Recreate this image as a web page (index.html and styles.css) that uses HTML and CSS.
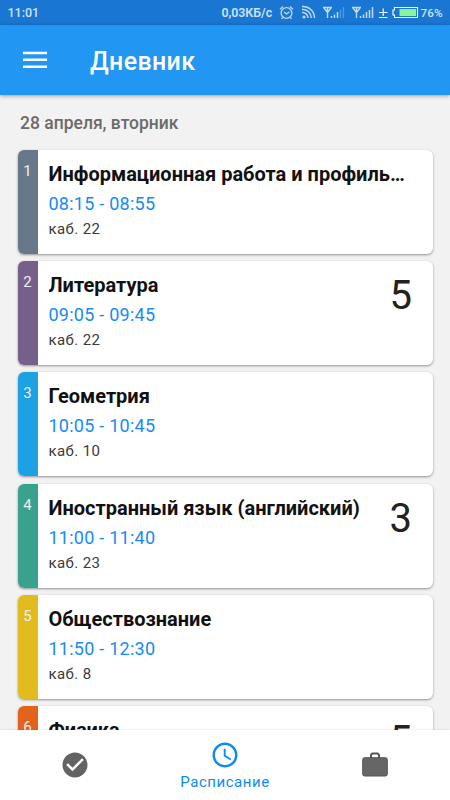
FILE: index.html
```html
<!DOCTYPE html>
<html lang="ru">
<head>
<meta charset="utf-8">
<title>Дневник</title>
<link rel="stylesheet" href="styles.css">
</head>
<body>
<div class="screen">
  <div class="status">
    <span class="clock">11:01</span>
    <span class="speed">0,03КБ/с</span>
    <svg class="status-icons" width="140" height="25" viewBox="0 0 140 25" fill="none" stroke="#c3daf3">
      <circle cx="9.5" cy="13" r="5.4" stroke-width="1.3"/>
      <path d="M3 9.2 6 6.6M16 9.2 13 6.6M7 12l2.5 2 3-2.3M5.500 17.500l-1 1.300M13.500 17.500l1 1.300" stroke-width="1.300"/>
      <circle cx="27" cy="17" r="1.6" fill="#c3daf3" stroke="none"/>
      <path d="M25 12.500a5.500 5.500 0 0 1 6 5.500M25 9.500a8.500 8.500 0 0 1 9.300 8.500M25 6.500a11.500 11.500 0 0 1 12.500 11.500" stroke-width="1.500"/>
      <path d="M46 7.500h9M47 8l3.500 4.500L54 8M50.500 7.500v10.500M75 7.500h9M76 8l3.500 4.500L83 8M79.500 7.500v10.500" stroke-width="1.400"/>
      <path d="M54.500 16v2M57.500 14.500v3.500M60.500 12v6M83.500 16v2M86.500 14.500v3.500M89.500 12v6M92.500 10v8M95.500 7v11" stroke-width="1.500"/>
      <path d="M63.500 10v8M66.500 7v11" stroke="#5698de" stroke-width="1.300"/>
      <path d="M102 12.500h8.500M106.200 8.500v7.500M102 17.500h8.500" stroke="#fff" stroke-width="1.100"/>
      <path d="M117.500 7.500h23v10h-23v-2.500h-1.500v-5h1.500z" stroke="#fff" stroke-width="1.100"/>
      <path d="M122.500 9h16.500v7h-16.500z" fill="#8cf59a" stroke="none"/>
    </svg>
    <span class="percent">76%</span>
  </div>
  <header class="appbar">
    <svg width="24" height="18" viewBox="0 0 24 18"><path d="M0 1.900h24M0 8.800h24M0 15.700h24" stroke="#fff" stroke-width="2.500"/></svg>
    <h1>Дневник</h1>
  </header>
  <main class="content">
    <h2>28 апреля, вторник</h2>
    <div class="lessons">
      <article class="card slate"><span class="num">1</span><div class="info"><h3>Информационная работа и профиль…</h3><p class="time">08:15 - 08:55</p><p class="room">каб. 22</p></div></article>
      <article class="card purple"><span class="num">2</span><div class="info"><h3>Литература</h3><p class="time">09:05 - 09:45</p><p class="room">каб. 22</p></div><span class="mark">5</span></article>
      <article class="card blue"><span class="num">3</span><div class="info"><h3>Геометрия</h3><p class="time">10:05 - 10:45</p><p class="room">каб. 10</p></div></article>
      <article class="card teal"><span class="num">4</span><div class="info"><h3>Иностранный язык (английский)</h3><p class="time">11:00 - 11:40</p><p class="room">каб. 23</p></div><span class="mark">3</span></article>
      <article class="card yellow"><span class="num">5</span><div class="info"><h3>Обществознание</h3><p class="time">11:50 - 12:30</p><p class="room">каб. 8</p></div></article>
      <article class="card orange"><span class="num">6</span><div class="info"><h3>Физика</h3></div><span class="mark">5</span></article>
    </div>
  </main>
  <nav class="tabs">
    <div class="tab"><svg width="30" height="30" viewBox="0 0 24 24" fill="#636363"><path d="M12 2C6.480 2 2 6.480 2 12s4.480 10 10 10 10-4.480 10-10S17.520 2 12 2zm-2 15l-5-5 1.410-1.410L10 14.170l7.590-7.590L19 8l-9 9z"/></svg></div>
    <div class="tab active"><svg width="30" height="30" viewBox="0 0 24 24" fill="#0d8bf2"><path d="M11.990 2C6.470 2 2 6.480 2 12s4.470 10 9.990 10C17.520 22 22 17.520 22 12S17.520 2 11.990 2zM12 20c-4.420 0-8-3.580-8-8s3.580-8 8-8 8 3.580 8 8-3.580 8-8 8zm.5-13H11v6l5.250 3.150.75-1.230-4.500-2.670z"/></svg><span>Расписание</span></div>
    <div class="tab"><svg class="case" width="26" height="25" viewBox="0 0 26 25"><path d="M9 6V2.800L10.300 1.500h5.400L17 2.800V6" fill="none" stroke="#555" stroke-width="2"/><rect x=".7" y="5.700" width="24.600" height="18.300" rx="1.800" fill="#666" stroke="#555"/></svg></div>
  </nav>
</div>
</body>
</html>
```
FILE: styles.css
```css
* { box-sizing: border-box; }
body { margin: 0; font-family: Roboto, "Noto Sans", sans-serif; }
h1, h2, h3, p { margin: 0; white-space: nowrap; }
.screen { width: 450px; height: 800px; display: flex; flex-direction: column; overflow: hidden; background: #f2f2f2; }
.status { flex: none; height: 25px; display: flex; align-items: center; padding: 0 7.500px; background: #1976d2; color: #cfe2f6; font-size: 12px; font-weight: 500; }
.clock { font-size: 12.500px; }
.speed { margin-left: auto; font-weight: 600; font-size: 12.300px; }
.status-icons { flex: none; margin: 0 4px 0 4.500px; overflow: visible; }
.percent { font-size: 11.700px; }
.appbar { flex: none; height: 70px; display: flex; align-items: center; padding-left: 23px; gap: 43px; background: #2196f3; box-shadow: 0 1px 4px rgba(0, 0, 0, .35); z-index: 1; }
.appbar h1 { color: #fff; font-size: 25px; line-height: 30px; font-weight: 500; letter-spacing: .35px; padding-top: 3px; }
.content { flex: 1; min-height: 0; overflow: hidden; padding: 16px 17px 0; }
.content h2 { color: #6b6b6b; font-size: 17.500px; line-height: 24px; font-weight: 500; padding-left: 3px; }
.lessons { display: flex; flex-direction: column; gap: 7.300px; padding-top: 14.800px; }
.card { flex: none; display: flex; height: 104px; margin: 0 .5px; border-radius: 6px; background: #fff; box-shadow: 0 1px 2.500px rgba(0, 0, 0, .4); overflow: hidden; }
.num { flex: none; width: 20px; padding-top: 11px; text-align: center; color: #eef0f3; font-size: 15px; line-height: 20px; background: var(--tone); }
.info { flex: 1; min-width: 0; padding: 11px 22px 0 11px; }
.info h3 { color: #111; font-size: 20px; line-height: 26px; font-weight: 700; overflow: hidden; text-overflow: ellipsis; }
.time { padding-top: 5px; color: #168bf3; font-size: 18px; line-height: 24px; letter-spacing: .25px; }
.room { padding-top: 3px; color: #3a3a3a; font-size: 15px; line-height: 20px; letter-spacing: .4px; }
.mark { flex: none; width: 43px; margin-left: -26px; padding-top: 11px; color: #222; font-size: 40px; line-height: 48px; }
.slate { --tone: #66788a; }
.purple { --tone: #775f8c; }
.blue { --tone: #1ea1e3; }
.teal { --tone: #3ba18f; }
.yellow { --tone: #e2bc1e; }
.orange { --tone: #e2631c; }
.tabs { flex: none; height: 70px; display: grid; grid-template-columns: repeat(3, 1fr); background: #fff; box-shadow: 0 0 2px rgba(0, 0, 0, .15); z-index: 1; }
.tab { display: flex; flex-direction: column; align-items: center; justify-content: center; }
.case { margin-bottom: 2px; }
.active { justify-content: flex-start; padding-top: 10px; color: #0d8bf2; font-size: 15px; line-height: 20px; letter-spacing: .55px; }
.active span { padding-top: 2px; }
```
